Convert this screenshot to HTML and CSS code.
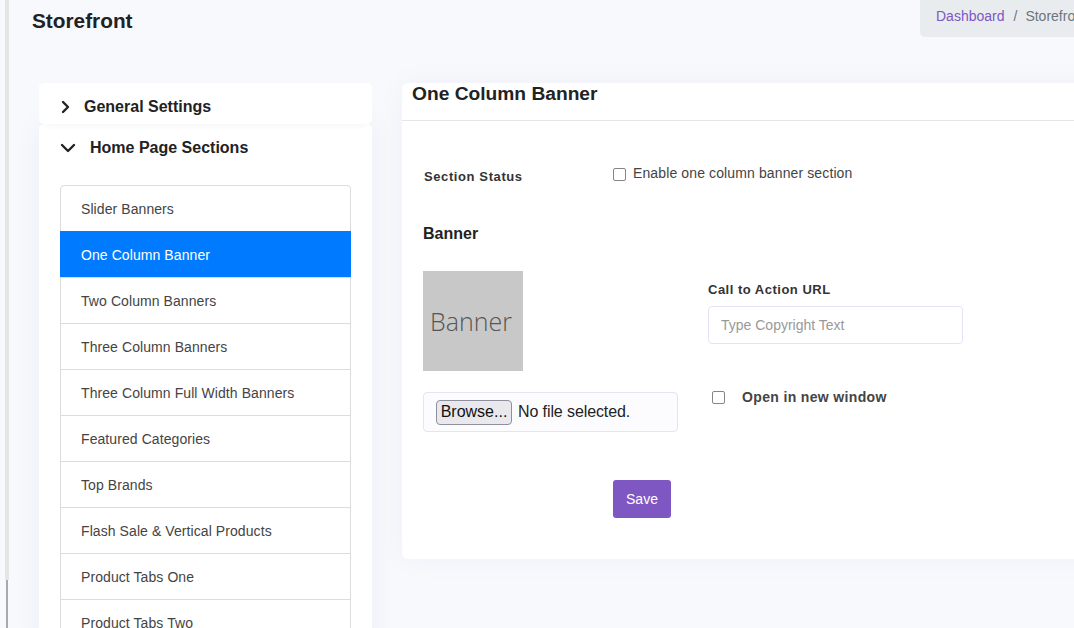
FILE: index.html
```html
<!DOCTYPE html>
<html>
<head>
<meta charset="utf-8">
<title>Storefront</title>
<link rel="stylesheet" href="styles.css">
</head>
<body>
<div class="shell">
  <div class="rail"><div class="rail-track"></div><div class="rail-thumb"></div></div>
  <div class="page">
    <header class="topbar">
      <h1 class="page-title">Storefront</h1>
      <nav class="crumbs"><a class="crumb-link">Dashboard</a><span class="crumb-sep">/</span><span class="crumb-current">Storefront</span></nav>
    </header>
    <div class="content">
      <aside class="sidebar">
        <div class="side-card side-card-closed">
          <div class="side-head">
            <svg class="chev" width="12" height="14" viewBox="0 0 12 14"><polyline points="3,2 8,7 3,12" fill="none" stroke="#222" stroke-width="2.4" stroke-linecap="round" stroke-linejoin="round"/></svg>
            <span>General Settings</span>
          </div>
        </div>
        <div class="side-card side-card-open">
          <div class="side-head side-head-open">
            <svg class="chev-down" width="16" height="12" viewBox="0 0 16 12"><polyline points="2,3 8,9 14,3" fill="none" stroke="#222" stroke-width="2.4" stroke-linecap="round" stroke-linejoin="round"/></svg>
            <span>Home Page Sections</span>
          </div>
          <ul class="list">
            <li class="item">Slider Banners</li>
            <li class="item active">One Column Banner</li>
            <li class="item">Two Column Banners</li>
            <li class="item">Three Column Banners</li>
            <li class="item">Three Column Full Width Banners</li>
            <li class="item">Featured Categories</li>
            <li class="item">Top Brands</li>
            <li class="item">Flash Sale &amp; Vertical Products</li>
            <li class="item">Product Tabs One</li>
            <li class="item">Product Tabs Two</li>
          </ul>
        </div>
      </aside>
      <main class="main-card">
        <div class="card-head"><h2 class="card-title">One Column Banner</h2></div>
        <div class="card-body">
          <div class="status-row">
            <label class="field-label status-label">Section Status</label>
            <label class="check"><span class="box"></span><span class="check-text">Enable one column banner section</span></label>
          </div>
          <h3 class="block-title">Banner</h3>
          <div class="banner-grid">
            <div class="col-left">
              <div class="thumb">Banner</div>
              <div class="file-box"><span class="browse">Browse...</span><span class="file-text">No file selected.</span></div>
            </div>
            <div class="col-right">
              <div class="field-label url-label">Call to Action URL</div>
              <div class="text-input">Type Copyright Text</div>
              <label class="check check-new"><span class="box"></span><span class="new-text">Open in new window</span></label>
            </div>
          </div>
          <div class="actions"><button class="save">Save</button></div>
        </div>
      </main>
    </div>
  </div>
</div>
</body>
</html>
```
FILE: styles.css
```css
* { box-sizing: border-box; }
html, body { margin: 0; padding: 0; }
body {
  background: #f8f9fd;
  font-family: "Liberation Sans", Arial, sans-serif;
  color: #333;
  overflow: hidden;
  height: 628px;
}
.shell { display: flex; width: 1250px; height: 628px; }
.rail { width: 9px; display: flex; flex-direction: column; flex: 0 0 9px; }
.rail-track { margin-left: 5px; width: 4px; height: 580px; background: #e5e6e4; }
.rail-thumb { margin-left: 6px; width: 2px; flex: 1; background: #a9a9a9; }
.page { flex: 1; }
.topbar { display: grid; grid-template-columns: 888px 1fr; height: 37px; padding-left: 23px; }
.page-title { margin: 10px 0 0; font-size: 20.8px; line-height: 22px; font-weight: 700; color: #222; }
.crumbs {
  background: #e9ecef; border-bottom-left-radius: 5px; height: 37px;
  display: flex; align-items: center; padding: 0 16px 6px; font-size: 14px;
}
.crumb-link { color: #7e57c2; }
.crumb-sep { color: #6c757d; padding: 0 8px 0 9px; }
.crumb-current { color: #6c757d; }

.content { display: flex; gap: 30px; padding: 46px 0 0 30px; align-items: flex-start; }
.sidebar { width: 333px; flex: 0 0 333px; }
.side-card { background: #fff; border-radius: 5px; box-shadow: 0 0 30px rgba(30,40,90,0.05); }
.side-card-closed { height: 41px; position: relative; z-index: 1; box-shadow: 0 6px 10px -6px rgba(0,0,0,0.06); }
.side-head { display: flex; align-items: center; height: 41px; padding: 7px 0 0 21px; font-size: 16px; font-weight: 700; color: #222; }
.side-head .chev { margin-right: 12px; }
.side-head-open { height: 46px; padding: 2px 0 0 21px; }
.chev-down { margin-right: 14px; }
.list { list-style: none; margin: 15px 21px 0; padding: 0; border: 1px solid #dcdcdc; border-radius: 4px 4px 0 0; }
.item { height: 46px; display: flex; align-items: center; padding-left: 20px; font-size: 14px; color: #444; border-top: 1px solid #dcdcdc; letter-spacing: 0.08px; }
.item:first-child { border-top: 0; height: 45px; }
.item.active { background: #007bff; color: #fff; border-top-color: #007bff; margin: 0 -1px; padding-left: 21px; }

.main-card { width: 760px; background: #fff; border-radius: 6px; box-shadow: 0 0 30px rgba(30,40,90,0.04); }
.card-head { padding: 1px 10px 16px; border-bottom: 1px solid #e6e6e6; }
.card-title { margin: 0; font-size: 19.2px; line-height: 20px; font-weight: 700; color: #222; }
.card-body { padding: 43px 21px 41px; }
.status-row { display: grid; grid-template-columns: 190px 1fr; align-items: center; height: 20px; }
.field-label { font-size: 13px; font-weight: 700; color: #333; letter-spacing: 0.6px; }
.status-label { padding-left: 1px; padding-top: 5px; }
.check { display: flex; align-items: center; }
.box { width: 13px; height: 13px; border: 1.5px solid #858585; border-radius: 2px; background: #fff; flex: 0 0 13px; }
.check-text { margin-left: 7px; font-size: 14px; color: #444; margin-top: -2px; letter-spacing: 0.12px; }
.block-title { margin: 40px 0 0; font-size: 16px; line-height: 20px; font-weight: 700; color: #222; }
.banner-grid { display: grid; grid-template-columns: 255px 255px; column-gap: 30px; margin-top: -1px; }
.thumb {
  margin-top: 28px; width: 100px; height: 100px; background: #c8c8c8;
  display: flex; align-items: center; justify-content: center; padding-right: 4px;
  font-family: "Open Sans", sans-serif; font-weight: 300; font-size: 25px; color: #555;
}
.file-box {
  margin-top: 21px; height: 40px; border: 1px solid #e3e4f5; border-radius: 4px; background: #fcfcff;
  display: flex; align-items: center; padding-left: 12px;
}
.browse {
  height: 25px; width: 76px; display: flex; align-items: center; justify-content: center;
  background: #e9e9ed; border: 1px solid #8f8f9d; border-radius: 4px; font-size: 16px; color: #111;
}
.file-text { margin-left: 6px; font-size: 16px; color: #222; letter-spacing: -0.1px; }
.url-label { margin-top: 39px; line-height: 16px; letter-spacing: 0.5px; }
.text-input {
  margin-top: 8px; height: 38px; border: 1px solid #e3e4f5; border-radius: 4px; background: #fff;
  display: flex; align-items: center; padding-left: 12px; font-size: 14px; color: #999;
}
.check-new { margin-top: 43px; height: 20px; padding-left: 4px; }
.new-text { margin-left: 17px; font-size: 14px; font-weight: 700; color: #444; letter-spacing: 0.35px; }
.actions { margin-top: 48px; padding-left: 190px; }
.save {
  width: 58px; height: 38px; border: 0; border-radius: 3px; background: #7e57c2; color: #fff;
  font-family: "Liberation Sans", Arial, sans-serif; font-size: 14px; padding: 0;
}
```
